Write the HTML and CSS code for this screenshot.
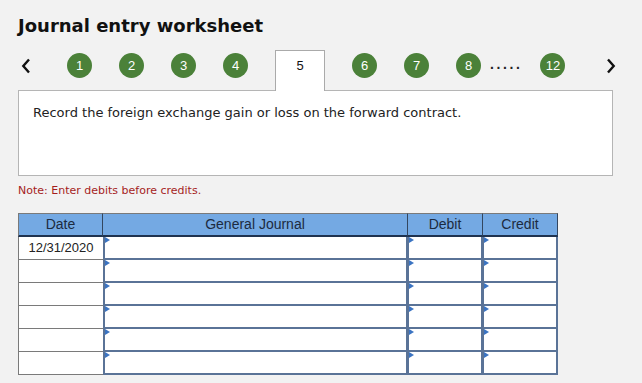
FILE: index.html
```html
<!DOCTYPE html>
<html lang="en">

<head>
    <meta charset="UTF-8">
    <title>Journal entry worksheet</title>
    <link rel="stylesheet" href="styles.css">
</head>

<body>
    <div class="worksheet">
        <h1 class="ws-title">Journal entry worksheet</h1>

        <div class="step-nav">
            <span class="arrow prev">
                <svg width="10" height="16" viewBox="0 0 10 16"><polyline points="8,1.5 2.3,8 8,14.5" fill="none" stroke="#111" stroke-width="2.4"/></svg>
            </span>
            <span class="step">1</span>
            <span class="step">2</span>
            <span class="step">3</span>
            <span class="step">4</span>
            <span class="step-tab">5</span>
            <span class="step">6</span>
            <span class="step">7</span>
            <span class="step">8</span>
            <span class="dots">.....</span>
            <span class="step last">12</span>
            <span class="arrow next">
                <svg width="10" height="16" viewBox="0 0 10 16"><polyline points="2,1.5 7.7,8 2,14.5" fill="none" stroke="#111" stroke-width="2.4"/></svg>
            </span>
        </div>

        <div class="task-box">
            <p>Record the foreign exchange gain or loss on the forward contract.</p>
        </div>

        <p class="note">Note: Enter debits before credits.</p>

        <div class="jtable">
            <div class="th first">Date</div>
            <div class="th">General Journal</div>
            <div class="th">Debit</div>
            <div class="th">Credit</div>

            <div class="date-cell">12/31/2020</div>
            <div class="in-cell gj"></div>
            <div class="in-cell mid"></div>
            <div class="in-cell end"></div>

            <div class="date-cell"></div>
            <div class="in-cell gj"></div>
            <div class="in-cell mid"></div>
            <div class="in-cell end"></div>

            <div class="date-cell"></div>
            <div class="in-cell gj"></div>
            <div class="in-cell mid"></div>
            <div class="in-cell end"></div>

            <div class="date-cell"></div>
            <div class="in-cell gj"></div>
            <div class="in-cell mid"></div>
            <div class="in-cell end"></div>

            <div class="date-cell"></div>
            <div class="in-cell gj"></div>
            <div class="in-cell mid"></div>
            <div class="in-cell end"></div>

            <div class="date-cell"></div>
            <div class="in-cell gj"></div>
            <div class="in-cell mid"></div>
            <div class="in-cell end"></div>
        </div>
    </div>
</body>

</html>
```

FILE: styles.css
```css
* {
    padding: 0;
    margin: 0;
    box-sizing: border-box;
}

body {
    background: #f2f2f2;
    font-family: "DejaVu Sans", Verdana, sans-serif;
    color: #222;
}

.worksheet {
    padding-left: 18px;
}

.ws-title {
    margin-top: 14px;
    height: 24px;
    line-height: 24px;
    font-size: 18px;
    font-weight: bold;
    color: #111;
}

.step-nav {
    display: flex;
    align-items: flex-start;
    height: 40px;
    margin-top: 12px;
}

.arrow {
    display: flex;
    align-items: center;
    height: 31px;
}

.prev {
    margin-left: 3px;
    margin-right: 36px;
}

.next {
    margin-left: 41px;
}

.step {
    width: 25px;
    height: 25px;
    margin-top: 3px;
    margin-right: 27px;
    border-radius: 50%;
    background: #4b8139;
    color: #fff;
    font-family: "Liberation Sans", Arial, sans-serif;
    font-size: 13px;
    line-height: 25px;
    text-align: center;
}

.step-tab {
    position: relative;
    z-index: 1;
    width: 50px;
    height: 41px;
    margin-right: 27px;
    background: #fff;
    border: 1px solid #aaa;
    border-bottom: none;
    font-family: "Liberation Sans", Arial, sans-serif;
    font-size: 13px;
    line-height: 16px;
    padding-top: 7px;
    text-align: center;
    color: #111;
}

.dots {
    margin-left: -18px;
    margin-right: 18px;
    margin-top: 4px;
    font-family: "Liberation Sans", Arial, sans-serif;
    font-size: 14px;
    font-weight: bold;
    letter-spacing: 2.6px;
    line-height: 20px;
    color: #222;
}

.step.last {
    margin-right: 0;
}

.task-box {
    width: 595px;
    height: 86px;
    background: #fff;
    border: 1px solid #b5b5b5;
    padding: 14px 0 0 14px;
}

.task-box p {
    font-size: 13px;
    line-height: 16px;
    color: #222;
}

.note {
    margin-top: 8px;
    font-size: 11px;
    line-height: 14px;
    color: #a51d1d;
}

.jtable {
    display: grid;
    grid-template-columns: 85px 305px 75px 75px;
    grid-template-rows: 24px repeat(6, 23px);
    width: 540px;
    margin-top: 15px;
    font-family: "Liberation Sans", Arial, sans-serif;
    font-size: 13px;
}

.th {
    background: #74a9e3;
    border-top: 1px solid #7a7a7a;
    border-right: 1px solid #33465f;
    border-bottom: 2px solid #1f3350;
    text-align: center;
    font-size: 14px;
    line-height: 21px;
    color: #1c2b40;
}

.th.first {
    border-left: 1px solid #7a7a7a;
}

.date-cell {
    background: #fff;
    border-left: 1px solid #7a7a7a;
    border-bottom: 1px solid #7a7a7a;
    text-align: center;
    line-height: 22px;
    color: #222;
}

.in-cell {
    position: relative;
    background: #fff;
    border-bottom: 2px solid #5a7397;
    border-right: 2px solid #5a7397;
}

.in-cell.gj {
    border-left: 2px solid #5a7397;
}

.in-cell.mid,
.in-cell.end {
    border-left: 1px solid #5a7397;
}

.in-cell::before {
    content: "";
    position: absolute;
    top: 0;
    left: 0;
    border-top: 3px solid transparent;
    border-bottom: 3px solid transparent;
    border-left: 5px solid #3b74c2;
}
```
